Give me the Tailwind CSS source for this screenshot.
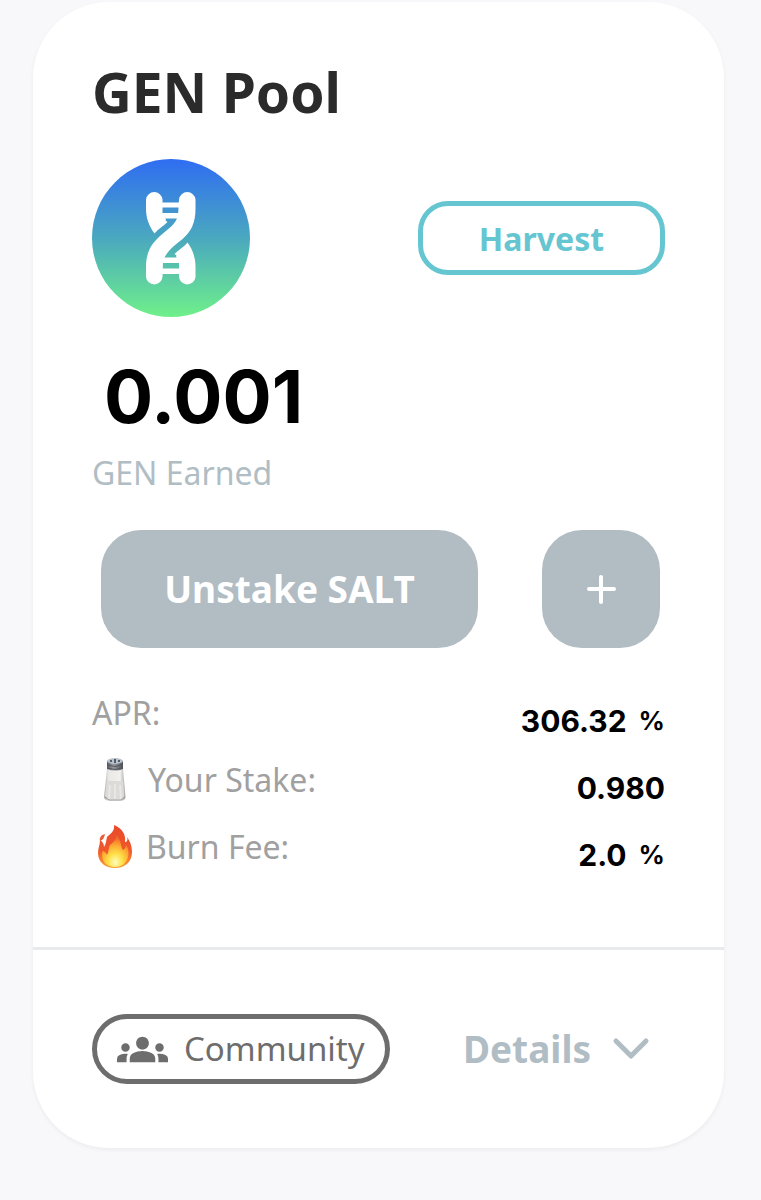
<!DOCTYPE html>
<html lang="en">
<head>
    <meta charset="UTF-8">
    <meta name="viewport" content="width=device-width, initial-scale=1.0">
    <title>GEN Pool</title>
    <script src="https://cdn.jsdelivr.net/npm/@tailwindcss/browser@4"></script>
</head>
<body class="min-h-screen bg-[#f8f8fb] pt-0.5 pl-[33px] pr-[37px] font-['Noto_Sans',sans-serif]">
    <main class="bg-white rounded-[76px] shadow-[0_2px_4px_rgba(0,0,0,0.05)]">
        <section class="pt-[62px] px-[59px] pb-[72px]">
            <h1 class="text-[55px] leading-14 font-bold text-[#2b2b2b]">GEN Pool</h1>

            <!-- Token and harvest -->
            <div class="mt-[39px] flex items-center justify-between">
                <svg class="size-[158px]" viewBox="0 0 158 158" role="img" aria-label="GEN">
                    <defs>
                        <linearGradient id="token" x1="0" y1="0" x2="0" y2="1">
                            <stop offset="0" stop-color="#2f6df2"/>
                            <stop offset="0.5" stop-color="#4aa8bf"/>
                            <stop offset="1" stop-color="#6ff08a"/>
                        </linearGradient>
                    </defs>
                    <circle cx="79" cy="79" r="79" fill="url(#token)"/>
                    <g fill="#fff">
                        <path d="M54 40.500a8.300 8.300 0 0 1 16.500 0V54C70.500 57 72 58.500 74 60L73.500 61.500L75.500 63C72 67 66 70 62.500 74.500C57 67 54 59 54 50Z"/>
                        <path d="M87 40.500a8.300 8.300 0 0 1 16.500 0V50C103.500 64 99 73 90 80.500C79 89 73.500 94 71 103L70.500 118a8.300 8.300 0 0 1-16.500 0V108C54 94 59 85 68 77C77 69 83 66 86 57Z"/>
                        <path d="M103.500 118a8.300 8.300 0 0 1-16.500 0V104C87 101 86 99.500 84 98L84.500 96.500L82.500 95C86 91 92 88 95.500 83.500C101 91 103.500 99 103.500 108Z"/>
                        <path d="M69 43.500H88V48.500H69ZM69 54H88V59.500H72ZM70 98.500H88V104H69ZM69 109.500H88V115H69Z"/>
                    </g>
                </svg>
                <button class="w-[247px] h-[74px] rounded-[30px] border-5 border-[#65c6d1] pt-0.5 text-[32px] leading-10 font-bold text-[#65c6d1]">Harvest</button>
            </div>

            <p class="mt-10 pl-3 font-['Inter',sans-serif] text-[73px] leading-20 font-bold text-black">0.001</p>
            <p class="mt-4 text-[32px] leading-10 text-[#b1bdc4]">GEN Earned</p>

            <!-- Stake actions -->
            <div class="mt-[37px] pl-[9px] pr-[5px] flex gap-16">
                <button class="flex-1 h-[118px] rounded-[40px] bg-[#b1bcc3] text-[37px] leading-12 font-bold text-white">Unstake SALT</button>
                <button class="size-[118px] rounded-[40px] bg-[#b1bcc3] flex items-center justify-center" aria-label="Stake more">
                    <svg class="size-8" viewBox="0 0 32 32" fill="none" stroke="#fff" stroke-width="4" stroke-linecap="round">
                        <path d="M16 4v25M4 16h25"/>
                    </svg>
                </button>
            </div>

            <!-- Stats -->
            <dl class="mt-[45px] flex flex-col gap-[19px] text-[32px] leading-10">
                <div class="flex items-start justify-between">
                    <dt class="text-[#a0a0a0]">APR:</dt>
                    <dd class="flex gap-3 pt-2 font-['Inter',sans-serif] text-[30px] leading-10 font-bold text-black"><span>306.32</span><span class="text-[26px]">%</span></dd>
                </div>
                <div class="flex items-start justify-between">
                    <dt class="flex h-10 items-center gap-2.5 text-[#a0a0a0]">
                        <svg class="w-[46px] h-[46px]" viewBox="0 0 46 46" aria-hidden="true">
                            <defs>
                                <linearGradient id="glass" x1="0" y1="0" x2="1" y2="0">
                                    <stop offset="0" stop-color="#aaa9a6"/>
                                    <stop offset="0.2" stop-color="#e9e8e5"/>
                                    <stop offset="0.75" stop-color="#f1f0ee"/>
                                    <stop offset="1" stop-color="#a5a4a1"/>
                                </linearGradient>
                                <linearGradient id="cap" x1="0" y1="0" x2="1" y2="0">
                                    <stop offset="0" stop-color="#55585e"/>
                                    <stop offset="0.4" stop-color="#9a9da3"/>
                                    <stop offset="1" stop-color="#4c4f55"/>
                                </linearGradient>
                            </defs>
                            <path d="M15 12H31L33.500 40Q33.500 43 29 44H17Q12 43 12 40Z" fill="url(#glass)"/>
                            <path d="M15 24L13 39L17 42H29L32 39L31 24Z" fill="#dcdbd8"/>
                            <path d="M18 28L17 42M23 27V43M28 28L29 42" stroke="#e8e7e5" stroke-width="2" fill="none"/>
                            <path d="M13 40L17 43H29L33 40" stroke="#999894" fill="none"/>
                            <path d="M15 4H31V12Q23 15 15 12Z" fill="url(#cap)"/>
                            <path d="M15 8Q23 11 31 8M15 11Q23 14 31 11" stroke="#55585e" fill="none"/>
                            <ellipse cx="23" cy="4" rx="8" ry="3" fill="#b9c1ca"/>
                            <path d="M18 4h2M22 3h2M26 4h2M22 5h2" stroke="#2f3c50" stroke-width="1.500"/>
                        </svg>
                        Your Stake:
                    </dt>
                    <dd class="pt-2 font-['Inter',sans-serif] text-[30px] leading-10 font-bold text-black">0.980</dd>
                </div>
                <div class="flex items-start justify-between">
                    <dt class="flex h-10 items-center gap-2 text-[#a0a0a0]">
                        <svg class="w-[46px] h-[46px]" viewBox="0 0 46 46" aria-hidden="true">
                            <defs>
                                <linearGradient id="flame" x1="0" y1="0" x2="0" y2="1">
                                    <stop offset="0" stop-color="#e9492c"/>
                                    <stop offset="0.6" stop-color="#f0592b"/>
                                    <stop offset="1" stop-color="#fba23a"/>
                                </linearGradient>
                                <radialGradient id="glow" cx="0.5" cy="0.85" r="0.75">
                                    <stop offset="0" stop-color="#fffbc0"/>
                                    <stop offset="0.35" stop-color="#ffe24a"/>
                                    <stop offset="0.75" stop-color="#fca22f"/>
                                    <stop offset="1" stop-color="#f3692d"/>
                                </radialGradient>
                            </defs>
                            <path d="M22 1C31 5 34 11 33 18C35 18 36 16 35 13C38 17 40 22 40 28C40 38 33 44 23 44C13 44 6 38 6 29C6 24 8 21 8 16C11 18 12 20 12 23C14 20 14 17 15 13C18 10 23 7 22 1Z" fill="url(#flame)"/>
                            <path d="M24 11C30 16 28 22 31 26C33 25 34 23 34 21C37 25 37 29 36 33C34 40 29 43 23 43C16 43 10 39 10 31C10 29 10 28 11 27C13 28 14 29 15 31C17 28 16 25 18 21C21 18 25 16 24 11Z" fill="url(#glow)"/>
                            <path d="M13 10C9 11 7 14 8 17C11 16 12 14 13 10Z" fill="#ef5a36"/>
                        </svg>
                        Burn Fee:
                    </dt>
                    <dd class="flex gap-3 pt-2 font-['Inter',sans-serif] text-[30px] leading-10 font-bold text-black"><span>2.0</span><span class="text-[26px]">%</span></dd>
                </div>
            </dl>
        </section>

        <!-- Footer -->
        <footer class="border-t-3 border-[#e9eaeb] px-[59px] py-16 flex items-center justify-between">
            <a href="#" class="h-[70px] px-5 rounded-full border-5 border-[#6d6d6d] flex items-center gap-4 text-[33px] leading-10 text-[#6d6d6d]">
                <svg class="w-[51px] h-[51px]" viewBox="0 0 24 24" fill="currentColor" aria-hidden="true">
                    <path d="M4 13c1.100 0 2-.9 2-2s-.9-2-2-2-2 .9-2 2 .9 2 2 2zm1.130 1.100C4.760 14.040 4.390 14 4 14c-.99 0-1.930.21-2.780.58A2.010 2.010 0 0 0 0 16.430V18h4.500v-1.610c0-.83.23-1.610.63-2.290zM20 13c1.100 0 2-.9 2-2s-.9-2-2-2-2 .9-2 2 .9 2 2 2zm4 3.430c0-.81-.48-1.530-1.220-1.850A6.950 6.950 0 0 0 20 14c-.39 0-.76.04-1.130.1.400.68.63 1.460.63 2.290V18H24v-1.570zM16.240 13.650A10.520 10.520 0 0 0 12 12.750c-1.630 0-3.070.39-4.240.9A2.990 2.990 0 0 0 6 16.390V18h12v-1.610c0-1.180-.68-2.260-1.760-2.740zM9 9c0-1.660 1.340-3 3-3s3 1.340 3 3-1.340 3-3 3-3-1.340-3-3z"/>
                </svg>
                Community
            </a>
            <button class="mr-3.5 flex items-center gap-5 text-[37px] leading-12 font-bold text-[#b1bdc4]">
                Details
                <svg class="size-10" viewBox="0 0 40 40" fill="none" stroke="currentColor" stroke-width="5" stroke-linecap="round" stroke-linejoin="round" aria-hidden="true">
                    <path d="M5 12L20 27L35 12"/>
                </svg>
            </button>
        </footer>
    </main>
</body>
</html>
